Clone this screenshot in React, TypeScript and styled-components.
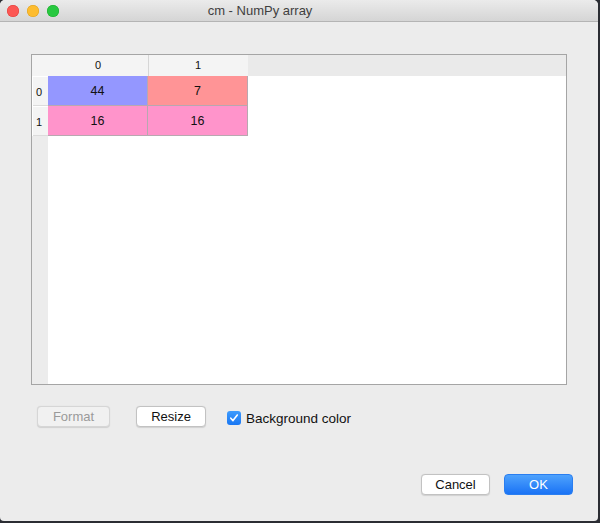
import React from "react";
import styled, { createGlobalStyle } from "styled-components";

const Global = createGlobalStyle`
  html, body { margin: 0; padding: 0; }
  body {
    width: 600px;
    height: 523px;
    overflow: hidden;
    background: #2b2d33;
    font-family: "Liberation Sans", Arial, sans-serif;
  }
`;

const Win = styled.div`
  width: 598px;
  height: 521px;
  background: #ececec;
  border-radius: 5px 5px 4px 4px;
  overflow: hidden;
  display: flex;
  flex-direction: column;
`;

const TitleBar = styled.div`
  height: 21px;
  flex: none;
  display: flex;
  align-items: center;
  position: relative;
  background: linear-gradient(#ebebeb, #d5d5d5);
  border-bottom: 1px solid #b4b4b4;
`;

const Lights = styled.div`
  display: flex;
  gap: 8px;
  padding-left: 7px;
  align-items: center;
`;

const Light = styled.span<{ $c: string; $b: string }>`
  width: 12px;
  height: 12px;
  border-radius: 50%;
  background: ${(p) => p.$c};
  box-shadow: inset 0 0 0 0.5px ${(p) => p.$b};
`;

const Title = styled.div`
  position: absolute;
  left: 0;
  width: 520px;
  text-align: center;
  font-size: 13px;
  color: #404040;
  top: 3px;
`;

const Body = styled.div`
  flex: 1;
  display: flex;
  flex-direction: column;
  padding: 32px 25px 0 31px;
`;

const Table = styled.div`
  width: 534px;
  height: 329px;
  border: 1px solid #a5a5a5;
  background: #ffffff;
  display: grid;
  grid-template-columns: 16px 100px 100px 1fr;
  grid-template-rows: 21px 30px 30px 1fr;
  font-size: 12px;
  color: #111;
`;

const Corner = styled.div`
  background: #f4f4f4;
`;

const ColHead = styled.div<{ $sep?: boolean }>`
  background: #f4f4f4;
  display: flex;
  align-items: center;
  justify-content: center;
  font-size: 11px;
  padding-bottom: 1px;
  box-shadow: ${(p) => (p.$sep ? "inset 1px 0 0 #d6d6d6" : "none")};
`;

const HeadFill = styled.div`
  background: #eaeaea;
`;

const RowHead = styled.div`
  background: #f4f4f4;
  display: flex;
  align-items: center;
  padding-left: 4px;
  font-size: 11px;
  border-top: 1px solid #ffffff;
  box-shadow: inset 1px 0 0 #ffffff, inset 0 -1px 0 #dcdcdc;
`;

const Cell = styled.div<{ $bg: string }>`
  background: ${(p) => p.$bg};
  display: flex;
  align-items: center;
  justify-content: center;
  border-right: 1px solid #b8a8b0;
  border-bottom: 1px solid #b8a8b0;
  font-size: 12.5px;
`;

const IndexFill = styled.div`
  background: #ececec;
`;

const BodyFill = styled.div`
  grid-column: 2 / 5;
  background: #ffffff;
`;

const CellFill = styled.div`
  background: #ffffff;
`;

const Controls = styled.div`
  display: flex;
  align-items: center;
  margin-top: 21px;
  padding-left: 6px;
`;

const Btn = styled.button<{ $w: number; $disabled?: boolean }>`
  width: ${(p) => p.$w}px;
  height: 21px;
  border-radius: 4px;
  border: 1px solid ${(p) => (p.$disabled ? "#d6d6d6" : "#c2c2c2")};
  background: ${(p) => (p.$disabled ? "#f1f1f1" : "#ffffff")};
  color: ${(p) => (p.$disabled ? "#9a9a9a" : "#111")};
  font-family: "Liberation Sans", Arial, sans-serif;
  font-size: 13px;
  padding: 0;
  box-shadow: 0 0.5px 1px rgba(0, 0, 0, 0.12);
  display: flex;
  align-items: center;
  justify-content: center;
`;

const Check = styled.label`
  display: flex;
  align-items: center;
  gap: 5px;
  margin-left: 21px;
  margin-top: 3px;
  font-size: 13.5px;
  color: #111;
`;

const Box = styled.span`
  width: 14px;
  height: 14px;
  border-radius: 3px;
  background: linear-gradient(#3e9bfd, #1977f3);
  display: flex;
  align-items: center;
  justify-content: center;
`;

const Footer = styled.div`
  margin-top: auto;
  display: flex;
  justify-content: flex-end;
  gap: 14px;
  padding-bottom: 26px;
`;

const OkBtn = styled.button`
  width: 69px;
  height: 21px;
  border-radius: 4px;
  border: 1px solid #2a7ef0;
  background: linear-gradient(#4ea2fd, #1a73f5);
  color: #ffffff;
  font-family: "Liberation Sans", Arial, sans-serif;
  font-size: 13px;
  padding: 0;
  display: flex;
  align-items: center;
  justify-content: center;
`;

const data = [
  ["44", "7"],
  ["16", "16"],
];
const colors = [
  ["#9497ff", "#ff9496"],
  ["#ff94cb", "#ff94cb"],
];

export default function App() {
  return (
    <>
      <Global />
      <Win>
        <TitleBar>
          <Lights>
            <Light $c="#fc5753" $b="#df3d39" />
            <Light $c="#fdbc2e" $b="#de9f1c" />
            <Light $c="#28c840" $b="#1aab29" />
          </Lights>
          <Title>cm - NumPy array</Title>
        </TitleBar>
        <Body>
          <Table>
            <Corner />
            <ColHead>0</ColHead>
            <ColHead $sep>1</ColHead>
            <HeadFill />
            {data.map((row, r) => (
              <React.Fragment key={r}>
                <RowHead>{r}</RowHead>
                {row.map((v, c) => (
                  <Cell key={c} $bg={colors[r][c]}>
                    {v}
                  </Cell>
                ))}
                <CellFill />
              </React.Fragment>
            ))}
            <IndexFill />
            <BodyFill />
          </Table>
          <Controls>
            <Btn $w={73} $disabled>
              Format
            </Btn>
            <Btn $w={70} style={{ marginLeft: 26 }}>
              Resize
            </Btn>
            <Check>
              <Box>
                <svg width="10" height="10" viewBox="0 0 10 10">
                  <path
                    d="M1.8 5.2 L4 7.6 L8.3 2"
                    fill="none"
                    stroke="#fff"
                    strokeWidth="1.6"
                    strokeLinecap="round"
                    strokeLinejoin="round"
                  />
                </svg>
              </Box>
              Background color
            </Check>
          </Controls>
          <Footer>
            <Btn $w={69}>Cancel</Btn>
            <OkBtn>OK</OkBtn>
          </Footer>
        </Body>
      </Win>
    </>
  );
}
